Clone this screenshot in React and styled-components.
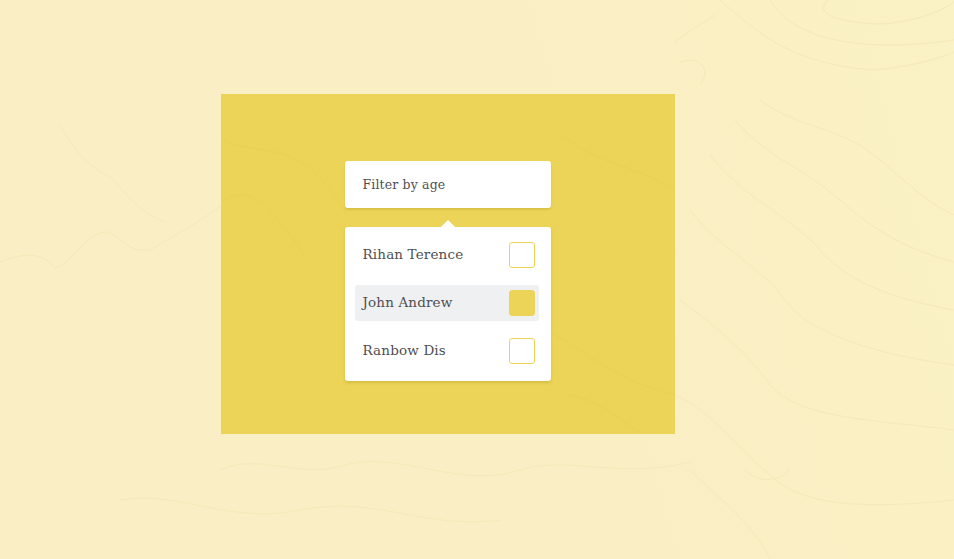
import React from 'react'
import styled, { createGlobalStyle } from 'styled-components'

const people = [
  { name: 'Rihan Terence', checked: false },
  { name: 'John Andrew', checked: true },
  { name: 'Ranbow Dis', checked: false },
]

const Global = createGlobalStyle`
  html, body { margin: 0; height: 100%; overflow: hidden; }
  body { background: #faefc4; font-family: "DejaVu Serif", "Liberation Serif", serif; }
`

// faint map contours behind everything
const Contours = () => (
  <BackLines viewBox="0 0 954 559" fill="none" stroke="#f6e8b8" strokeWidth="1">
    <path d="M0 262C30 250 45 255 55 268C75 262 85 232 108 232C125 240 128 252 150 250C175 235 200 222 222 205" />
    <path d="M60 125C75 150 85 165 112 178C130 200 145 215 165 222" />
    <path d="M828 0C815 12 830 22 880 24C915 22 940 12 954 2" />
    <path d="M770 0C790 35 850 55 954 40" />
    <path d="M720 0C760 35 790 62 870 70C905 68 935 60 954 52" />
    <path d="M675 42C690 30 712 18 716 14M680 62C700 55 712 70 700 85" />
    <path d="M760 100C800 130 840 125 880 160C910 185 930 205 954 215" />
    <path d="M735 120C770 160 800 165 840 200C880 235 910 250 954 262" />
    <path d="M710 155C745 200 790 215 820 250C850 285 900 300 954 310" />
    <path d="M690 210C720 250 760 265 785 300C810 335 880 355 954 365" />
    <path d="M680 300C720 330 745 350 770 385C800 420 880 420 954 430" />
    <path d="M675 395C710 410 740 450 770 475C800 505 860 510 954 500" />
    <path d="M220 470C260 452 300 480 345 465C400 450 460 490 520 470C570 455 620 480 690 462" />
    <path d="M120 500C180 490 230 525 300 510C380 495 420 530 500 520" />
    <path d="M690 470C720 500 750 520 770 559M745 470C760 485 780 480 790 470" />
  </BackLines>
)

const Panel = () => (
  <YellowPanel>
    <PanelLines viewBox="0 0 454 340" fill="none" stroke="#e9d154" strokeWidth="1">
      <path d="M0 108C15 98 30 98 45 112C60 130 70 140 85 165" />
      <path d="M0 45C30 60 60 50 90 75C105 90 115 100 125 120" />
      <path d="M320 235C360 250 395 290 454 300" />
      <path d="M345 300C375 305 400 325 420 340" />
      <path d="M340 40C375 70 410 70 454 95" />
    </PanelLines>
    <Stack>
      <FilterBox>Filter by age</FilterBox>
      <ListCard>
        {people.map((person) => (
          <Row key={person.name} $active={person.checked}>
            <Name>{person.name}</Name>
            <Check $checked={person.checked} />
          </Row>
        ))}
      </ListCard>
    </Stack>
  </YellowPanel>
)

export default function App() {
  return (
    <Page>
      <Global />
      <Contours />
      <Panel />
    </Page>
  )
}

const Page = styled.main`
  position: relative;
  width: 954px;
  height: 559px;
  padding: 94px 0 0 221px;
  box-sizing: border-box;
  overflow: hidden;
  background: linear-gradient(75deg, #faeec4 0%, #faefc4 60%, #faf1c4 100%);
`

const BackLines = styled.svg`
  position: absolute;
  inset: 0;
  width: 954px;
  height: 559px;
`

const YellowPanel = styled.section`
  position: relative;
  width: 454px;
  height: 340px;
  box-sizing: border-box;
  padding-top: 67px;
  display: flex;
  justify-content: center;
  background: #ecd458;
`

const PanelLines = styled.svg`
  position: absolute;
  inset: 0;
  width: 454px;
  height: 340px;
`

const Stack = styled.div`
  position: relative;
  width: 206px;
  margin-left: -1px;
  display: flex;
  flex-direction: column;
  gap: 19px;
`

const FilterBox = styled.div`
  height: 47px;
  padding: 0 18px;
  display: flex;
  align-items: center;
  background: #fff;
  border-radius: 3px;
  box-shadow: 0 2px 2px rgba(150, 125, 20, 0.22);
  color: #4f4f52;
  font-size: 12.5px;
  letter-spacing: 0.15px;
`

const ListCard = styled.div`
  position: relative;
  height: 154px;
  box-sizing: border-box;
  padding: 10px 12px 0 10px;
  display: flex;
  flex-direction: column;
  gap: 12px;
  background: #fff;
  border-radius: 3px;
  box-shadow: 0 2px 3px rgba(150, 125, 20, 0.25);

  &::before {
    content: '';
    position: absolute;
    top: -7px;
    left: 96px;
    border-left: 7px solid transparent;
    border-right: 7px solid transparent;
    border-bottom: 7px solid #fff;
  }
`

const Row = styled.div`
  height: 36px;
  padding: 0 4px 0 8px;
  display: flex;
  align-items: center;
  justify-content: space-between;
  background: ${(p) => (p.$active ? '#eff0f1' : 'transparent')};
  border-radius: 3px;
`

const Name = styled.span`
  color: #4f4f52;
  font-size: 13.5px;
  letter-spacing: 0.15px;
  margin-top: -2px;
`

const Check = styled.span`
  width: 26px;
  height: 26px;
  box-sizing: border-box;
  border-radius: 3px;
  border: 1px solid #ecd458;
  background: ${(p) => (p.$checked ? '#ecd458' : '#fff')};
`
